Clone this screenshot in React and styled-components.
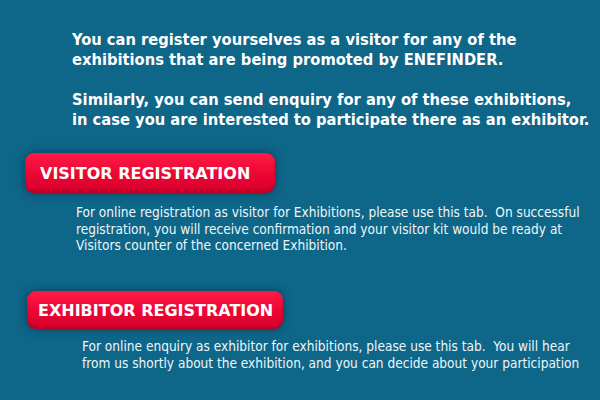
import React from 'react'
import styled, { createGlobalStyle } from 'styled-components'

const Global = createGlobalStyle`
  html, body {
    margin: 0;
    padding: 0;
    background: #0e6688;
  }
`

const Page = styled.div`
  width: 600px;
  height: 400px;
  box-sizing: border-box;
  padding-top: 30px;
  background: #0e6688;
  overflow: hidden;
`

const Intro = styled.div`
  margin-left: 72px;
  color: #ffffff;
  font-family: "DejaVu Sans Condensed", "DejaVu Sans", sans-serif;
  font-weight: bold;
  font-size: 16.35px;
  line-height: 20px;
`

const IntroP = styled.p`
  margin: 0 0 20px;
  &:last-child {
    margin-bottom: 0;
  }
`

const Section = styled.div`
  margin-left: ${p => p.$left}px;
  margin-top: ${p => p.$top}px;
`

const RegButton = styled.a`
  display: flex;
  align-items: center;
  box-sizing: border-box;
  width: ${p => p.$width}px;
  height: ${p => p.$height}px;
  padding-left: ${p => p.$pad}px;
  border-radius: 9px;
  background: linear-gradient(#ff1a48, #ec0533 55%, #d4002c);
  box-shadow: 0 0 8px rgba(0, 30, 50, 0.55), inset 0 -2px 3px rgba(120, 0, 20, 0.35);
  color: #ffffff;
  font-family: "DejaVu Sans", sans-serif;
  font-weight: bold;
  font-size: 16px;
  text-decoration: none;
  cursor: pointer;
`

const Desc = styled.p`
  margin: ${p => p.$top}px 0 0 ${p => p.$indent}px;
  color: #eef6fa;
  font-family: "DejaVu Sans Condensed", "DejaVu Sans", sans-serif;
  font-size: 13.55px;
  line-height: 16.5px;
`

export default function App() {
  return (
    <Page>
      <Global />
      <Intro>
        <IntroP>
          You can register yourselves as a visitor for any of the<br />
          exhibitions that are being promoted by ENEFINDER.
        </IntroP>
        <IntroP>
          Similarly, you can send enquiry for any of these exhibitions,<br />
          in case you are interested to participate there as an exhibitor.
        </IntroP>
      </Intro>

      <Section $left={25} $top={23}>
        <RegButton $width={250} $height={40} $pad={15}>VISITOR REGISTRATION</RegButton>
        <Desc $indent={51} $top={11}>
          For online registration as visitor for Exhibitions, please use this tab.&nbsp; On successful<br />
          registration, you will receive confirmation and your visitor kit would be ready at<br />
          Visitors counter of the concerned Exhibition.
        </Desc>
      </Section>

      <Section $left={27} $top={37.5}>
        <RegButton $width={256} $height={38} $pad={11}>EXHIBITOR REGISTRATION</RegButton>
        <Desc $indent={55} $top={9}>
          For online enquiry as exhibitor for exhibitions, please use this tab.&nbsp; You will hear<br />
          from us shortly about the exhibition, and you can decide about your participation
        </Desc>
      </Section>
    </Page>
  )
}
